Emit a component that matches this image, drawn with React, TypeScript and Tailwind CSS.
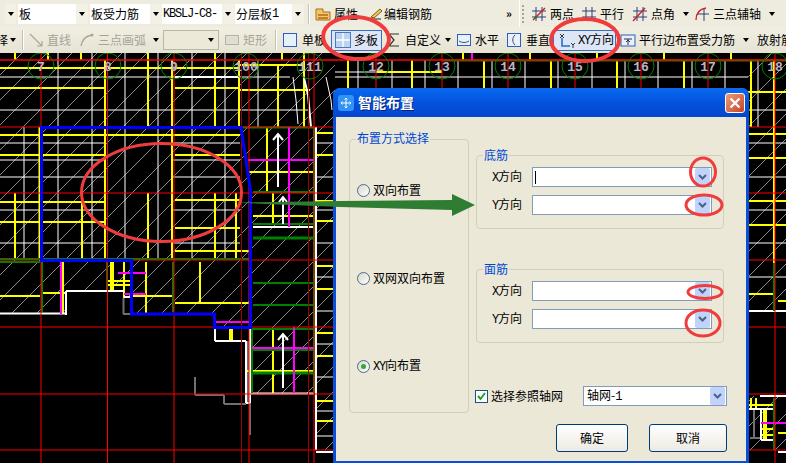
import type { ReactNode } from 'react'

type Seg = [number, number, number, number]

const ys = (y: number, a: number, b: number): Seg => [a, y, b, y]
const xs = (x: number, a: number, b: number): Seg => [x, a, x, b]

const whiteThin: Seg[] = [
  ...[24, 58, 92, 125, 158, 192, 225].map((x) => xs(x, 127, 260)),
  ...[58, 92, 125, 158, 192, 225].map((x) => xs(x, 53, 127)),
  ...[143, 160, 177, 210, 243].flatMap((y) => [ys(y, 0, 105), ys(y, 172, 240)]),
  ys(77, 0, 240),
  ys(110, 0, 310),
  ys(110, 748, 786),
  ...[277, 311, 344, 377, 411, 436, 143, 177, 210, 243].map((y) => ys(y, 316, 335)),
  ...[358, 392, 425, 458, 492, 525, 558, 592, 625, 658, 692, 725, 758].map((x) => xs(x, 60, 88)),
  ys(72, 335, 376),
  ys(77, 335, 748),
  xs(758, 88, 127),
  ...[143, 177, 210, 243, 277].map((y) => ys(y, 748, 786)),
  xs(258, 60, 127),
  ys(77, 240, 290),
]

const whiteThick: Seg[] = [
  ys(77, 175, 240),
  xs(316, 127, 450),
  ys(313.5, 0, 66),
  xs(66, 291, 315),
  ys(291, 66, 124),
  ys(297, 124, 131),
  xs(215, 328, 341),
  ys(341, 215, 246),
  xs(246, 341, 403),
  ys(403, 246, 250),
  xs(250, 327, 403),
  ys(227, 253, 314),
  ys(393.5, 250, 314),
  ys(311, 748, 786),
  ys(452, 316, 335),
  ys(452, 778, 786),
  ys(409, 748, 775),
  ys(396, 760, 786),
  xs(761, 410, 440),
  ys(440, 761, 775),
]

const yellow: Seg[] = [
  ys(68, 0, 105),
  ys(68, 108, 172),
  ys(68, 172, 240),
  ys(65, 240, 305),
  ys(90, 240, 310),
  ys(88, 0, 105),
  ys(88, 175, 240),
  ys(135, 0, 240),
  ys(155, 0, 105),
  ys(155, 175, 240),
  ys(202, 0, 105),
  ys(200, 175, 240),
  ys(222, 0, 105),
  ys(228, 175, 240),
  ys(251, 175, 249),
  xs(39.5, 127, 260),
  xs(105, 60, 260),
  xs(148, 53, 127),
  xs(172, 60, 260),
  xs(215, 53, 127),
  xs(239, 60, 127),
  xs(278, 65, 127),
  xs(304, 53, 127),
  xs(15, 193, 260),
  xs(82, 193, 260),
  xs(148, 193, 260),
  xs(215, 193, 260),
  xs(236, 193, 260),
  xs(15, 53, 60),
  xs(48, 53, 60),
  xs(81, 53, 60),
  xs(282, 53, 60),
  xs(267, 127, 193),
  ys(172, 248, 314),
  xs(273, 193, 225),
  ys(216, 253, 314),
  xs(200, 262, 303),
  ys(303, 175, 249),
  xs(63, 262, 314),
  ys(296, 0, 40),
  ys(293, 42, 65),
  ys(281, 108, 130),
  ys(285, 108, 130),
  xs(124, 262, 298),
  xs(146, 262, 313),
  ys(296, 130, 174),
  xs(273, 328, 393),
  ys(371, 247, 314),
  ...[133, 155, 201, 221, 266, 289, 333, 356, 401, 421].map((y) => ys(y, 316, 335)),
  ...[348, 412, 484, 551, 617, 684, 751].map((x) => xs(x, 60, 88)),
  ...[463, 530, 597, 664, 731].map((x) => xs(x, 53, 60)),
  ys(72, 376, 442),
  ys(92, 748, 786),
  ys(134, 748, 786),
  ys(158, 748, 786),
  ys(201, 748, 786),
  ys(225, 748, 786),
  ys(294, 748, 775),
  ys(301, 778, 786),
  xs(774, 60, 263),
  xs(751, 88, 127),
  xs(751, 398, 410),
  xs(756, 398, 410),
  ys(405, 748, 775),
  ys(429, 762, 775),
  ys(435, 762, 775),
  ys(433, 778, 786),
]

const yellowFat: Seg[] = [xs(112, 262, 291), xs(231, 328, 340), xs(765, 410, 440)]

const magenta: Seg[] = [
  xs(472, 53, 60),
  xs(289, 127, 227),
  ys(160, 248, 314),
  xs(61, 262, 314),
  ys(273, 118, 146),
  ys(294, 124, 146),
  ys(322, 215, 249),
  xs(294, 327, 393),
  ys(348, 252, 314),
  ys(423, 761, 786),
]

const green: Seg[] = [
  ys(60.5, 442, 786),
  ys(127.5, 243, 314),
  ys(192, 253, 314),
  ys(224, 253, 314),
  ys(283, 253, 314),
  ys(305, 253, 314),
  ys(259, 0, 250),
  ys(262, 0, 40),
  xs(42, 262, 312),
  xs(107, 262, 290),
  xs(173, 262, 312),
  xs(252, 329, 393),
  xs(314, 127, 393),
  ys(329, 252, 314),
  ys(350, 252, 314),
  xs(774, 263, 311),
  xs(774, 398, 450),
]

const gray: Seg[] = [
  xs(123.5, 298, 314),
  ys(314, 123, 131),
  xs(195, 377, 395),
  ys(395, 195, 224),
  xs(224, 395, 404),
  ys(404, 224, 246),
  xs(250, 403, 435),
  xs(248, 341, 403),
  xs(754, 410, 438),
  ys(438, 750, 760),
]

const axes = [
  [41, '7'],
  [108, '8'],
  [174, '9'],
  [246, '100'],
  [310, '111'],
  [376, '12'],
  [442, '13'],
  [508, '14'],
  [575, '15'],
  [641, '16'],
  [708, '17'],
  [775, '18'],
] as const

function Lines({ segs, color, width }: { segs: Seg[]; color: string; width: number }) {
  return (
    <g stroke={color} strokeWidth={width}>
      {segs.map((s, i) => (
        <line key={i} x1={s[0]} y1={s[1]} x2={s[2]} y2={s[3]} />
      ))}
    </g>
  )
}

function CadCanvas() {
  return (
    <svg className="block h-[410px] w-[786px] flex-none bg-black" viewBox="0 53 786 410">
      <defs>
        <pattern id="hatch" width="25" height="25" patternUnits="userSpaceOnUse">
          <path d="M-5 30 L30 -5" stroke="#8a8a8a" strokeWidth="1" />
        </pattern>
      </defs>
      {/* hatched slab area */}
      <path
        d="M0 53H786V311H748V53H335V450H316V394H250V327H215V314H131V298H124V291H66V313H0Z"
        fill="url(#hatch)"
      />
      <path d="M748 396H786V450H748Z" fill="url(#hatch)" />
      <Lines segs={whiteThin} color="#ffffff" width={1} />
      <Lines segs={gray} color="#707070" width={2} />
      <Lines segs={yellow} color="#ffff00" width={2} />
      <Lines segs={yellowFat} color="#ffff00" width={4} />
      <Lines segs={whiteThick} color="#ffffff" width={2} />
      <g fill="none" stroke="#ffffff">
        <path d="M293 77L296 100L298 124" />
        <path d="M304 78L308 95L311 127" strokeWidth="2" />
        <path d="M326 77L331 100L332 110" />
      </g>
      <Lines segs={green} color="#008000" width={2} />
      <Lines segs={[ys(238, 253, 314), ys(373, 252, 314)]} color="#008000" width={3} />
      <Lines segs={magenta} color="#ff00ff" width={2} />
      {/* axis grid */}
      <g stroke="#ff0000" strokeWidth="1">
        {[41, 107.5, 174, 249, 314, 376, 442, 508, 575, 641, 708, 775].map((x) => (
          <line key={x} x1={x} y1="53" x2={x} y2="463" />
        ))}
        {[127, 193, 260, 327, 394, 450].map((y) => (
          <line key={y} x1="0" y1={y} x2="786" y2={y} />
        ))}
        <line x1="0" y1="60" x2="786" y2="60" strokeWidth="1.5" />
      </g>
      <g stroke="#a00000" strokeWidth="1">
        <line x1="241.5" y1="53" x2="241.5" y2="463" />
        <line x1="308.5" y1="53" x2="308.5" y2="463" />
      </g>
      {/* rebar arrows */}
      <g fill="none" stroke="#ffffff" strokeWidth="2">
        <path d="M278 187V135M273 140L278 134L283 140" />
        <path d="M283 224V198M279 202L283 197L287 202" />
        <path d="M283 388V335M278 340L283 334L288 340" />
      </g>
      {/* slab outline */}
      <path
        d="M41.5 127.5H241L250.5 190V327.5H214.5V314H131.5V260.5H41.5Z"
        fill="none"
        stroke="#0000ff"
        strokeWidth="3"
      />
      {axes.map(([x, label]) => (
        <g key={label}>
          <circle cx={x} cy="66" r="13" fill="none" stroke="#008000" strokeWidth="1" />
          <text
            x={x}
            y="71"
            textAnchor="middle"
            fill="#b8b8c8"
            fontSize="13"
            fontWeight="700"
            fontFamily="'Liberation Mono', monospace"
          >
            {label}
          </text>
        </g>
      ))}
    </svg>
  )
}

function Overlay() {
  return (
    <svg className="pointer-events-none absolute left-0 top-0 h-[463px] w-[786px]" viewBox="0 0 786 463">
      <path
        d="M231 202.5L340 201L452 200V194L475 205L452 216V210L340 207Z"
        fill="#2e7d32"
      />
      <g fill="none" stroke="#f03c3c" strokeWidth="3">
        <ellipse cx="161.5" cy="192.5" rx="80" ry="49" />
        <ellipse cx="356" cy="38" rx="33" ry="21" strokeWidth="4" transform="rotate(4 356 38)" />
        <ellipse cx="585" cy="40" rx="34" ry="21" strokeWidth="4" />
        <ellipse cx="703" cy="172" rx="12.5" ry="14" />
        <ellipse cx="704" cy="205" rx="18" ry="10" />
        <ellipse cx="705" cy="292" rx="17" ry="6.5" />
        <ellipse cx="703" cy="323" rx="17" ry="13" />
      </g>
    </svg>
  )
}

function Half({ children }: { children: ReactNode }) {
  return <span className="font-['Liberation_Mono',monospace] tracking-[-1.2px]">{children}</span>
}

function DownArrow({ className = '' }: { className?: string }) {
  return (
    <span
      className={`h-0 w-0 flex-none border-x-[3.5px] border-t-[4px] border-x-transparent border-t-black ${className}`}
    />
  )
}

function Sep({ className = '' }: { className?: string }) {
  return <span className={`h-[20px] w-[2px] flex-none border-l border-r border-l-[#c5c2b0] border-r-white ${className}`} />
}

function ToolCombo({ children, width }: { children?: ReactNode; width: string }) {
  return (
    <>
      <span className={`flex h-[20px] flex-none items-center bg-white pl-[1px] ${width}`}>{children}</span>
      <span className="flex h-[20px] w-[12px] flex-none items-center justify-center bg-[#f3f1e6]">
        <DownArrow />
      </span>
    </>
  )
}

function Icon({ children, className = '' }: { children: ReactNode; className?: string }) {
  return (
    <svg className={`h-[16px] w-[16px] flex-none ${className}`} viewBox="0 0 16 16" fill="none">
      {children}
    </svg>
  )
}

function TopToolbar() {
  return (
    <div className="flex h-[27px] flex-none items-center bg-[#eeecdf] pl-[5px] text-[12px] text-black">
      <span className="flex h-[20px] w-[11px] flex-none items-center justify-center bg-[#f3f1e6]">
        <DownArrow />
      </span>
      <span className="w-[2px] flex-none" />
      <ToolCombo width="w-[58px]">板</ToolCombo>
      <span className="w-[2px] flex-none" />
      <ToolCombo width="w-[60px]">板受力筋</ToolCombo>
      <ToolCombo width="w-[60px]">
        <Half>KBSLJ-C8-</Half>
      </ToolCombo>
      <span className="w-[1px] flex-none" />
      <ToolCombo width="w-[57px]">
        分层板<Half>1</Half>
      </ToolCombo>
      <Sep className="ml-[4px]" />
      <Icon className="ml-[5px]">
        <path d="M1 3H8V6H15V14H1Z" fill="#f4c66a" stroke="#a8701c" />
        <path d="M3 9H13M3 12H13" stroke="#b26a10" strokeWidth="1.5" />
      </Icon>
      <span className="ml-[3px] w-[27px] flex-none">属性</span>
      <Icon className="ml-[6px]">
        <path d="M2 13H14" stroke="#222" />
        <path d="M4 11L13 3L15 5L7 12Z" fill="#f0c860" stroke="#7a5a10" />
      </Icon>
      <span className="ml-[1px] w-[60px] flex-none">编辑钢筋</span>
      <span className="ml-[62px] w-[12px] flex-none text-[11px] font-bold leading-none">»</span>
      <span className="ml-[1px] h-[27px] w-[1px] flex-none bg-white" />
      <span className="ml-[2px] h-[18px] w-[2px] flex-none border-l-2 border-dotted border-[#a8a698]" />
      <Icon className="ml-[7px]">
        <path d="M5 1V15M11 1V15M1 5H15M1 11H15" stroke="#2a3f7a" />
        <path d="M2 14L14 2" stroke="#d02020" strokeWidth="1.4" />
        <circle cx="5" cy="11" r="1.5" fill="#2a7a2a" />
      </Icon>
      <span className="ml-[3px] w-[25px] flex-none">两点</span>
      <Icon className="ml-[6px]">
        <path d="M5 1V15M11 1V15M1 5H15M1 11H15" stroke="#2a3f7a" />
      </Icon>
      <span className="ml-[3px] w-[26px] flex-none">平行</span>
      <Icon className="ml-[6px]">
        <path d="M5 1V15M11 1V15M1 5H15M1 11H15" stroke="#2a3f7a" />
        <path d="M1 15L13 2" stroke="#d02020" strokeWidth="1.4" />
      </Icon>
      <span className="ml-[3px] w-[26px] flex-none">点角</span>
      <DownArrow className="ml-[6px]" />
      <Icon className="ml-[5px]">
        <path d="M10 2V15M3 8H15" stroke="#2a3f7a" />
        <path d="M2 14C2 7 6 3 12 2" stroke="#d02020" strokeWidth="1.3" />
      </Icon>
      <span className="ml-[3px] w-[50px] flex-none">三点辅轴</span>
      <DownArrow className="ml-[6px]" />
    </div>
  )
}

function BottomToolbar() {
  return (
    <div className="flex h-[26px] flex-none items-center overflow-hidden bg-gradient-to-b from-[#f1efe3] to-[#e6e3d3] text-[12px] text-black">
      <span className="ml-[-4px] w-[12px] flex-none">择</span>
      <DownArrow className="ml-[2px]" />
      <Sep className="ml-[6px]" />
      <Icon className="ml-[4px]">
        <path d="M2 2L14 14M14 14V9M14 14H9" stroke="#a8a698" strokeWidth="1.2" />
      </Icon>
      <span className="ml-[3px] w-[26px] flex-none text-[#a5a396]">直线</span>
      <Icon className="ml-[6px]">
        <path d="M2 14C3 7 7 4 13 3" stroke="#a8a698" strokeWidth="1.4" />
        <circle cx="13" cy="3" r="1.5" fill="#a8a698" />
      </Icon>
      <span className="ml-[3px] w-[50px] flex-none text-[#a5a396]">三点画弧</span>
      <DownArrow className="ml-[5px] border-t-[#a5a396]" />
      <span className="ml-[4px] flex h-[20px] w-[56px] flex-none items-center justify-end border border-[#b8b6a4] bg-[#ece9d8] pr-[4px]">
        <DownArrow className="border-t-[#a5a396]" />
      </span>
      <Icon className="ml-[5px]">
        <rect x="1.5" y="3.5" width="13" height="9" fill="#e0ded0" stroke="#b5b3a5" />
      </Icon>
      <span className="ml-[3px] w-[26px] flex-none text-[#a5a396]">矩形</span>
      <Sep className="ml-[6px]" />
      <Icon className="ml-[5px]">
        <rect x="1.5" y="1.5" width="13" height="13" fill="#e8f0fb" stroke="#2c5fc0" />
      </Icon>
      <span className="ml-[4px] w-[23px] flex-none overflow-hidden whitespace-nowrap">单板</span>
      <span className="ml-[6px] flex h-[21px] w-[51px] flex-none items-center border border-[#3a6ec2] bg-[#dce6f6]">
        <svg className="ml-[3px] h-[16px] w-[16px] flex-none" viewBox="0 0 16 16">
          <rect x="0.5" y="0.5" width="15" height="15" fill="#bcd4f2" stroke="#4a7ab8" />
          <path d="M8 1V15M1 8H15" stroke="#fff" strokeWidth="1.4" />
        </svg>
        <span className="ml-[3px]">多板</span>
      </span>
      <Icon className="ml-[4px]">
        <path d="M13 2H3L8 8L3 14H13" stroke="#333" strokeWidth="1.2" />
      </Icon>
      <span className="ml-[3px] w-[38px] flex-none">自定义</span>
      <DownArrow className="ml-[2px]" />
      <Icon className="ml-[5px]">
        <rect x="1.5" y="2.5" width="13" height="11" fill="#e8f0fb" stroke="#2c5fc0" />
        <path d="M3 9C6 11 10 11 13 9" stroke="#446" />
      </Icon>
      <span className="ml-[3px] w-[26px] flex-none">水平</span>
      <Icon className="ml-[5px]">
        <rect x="1.5" y="1.5" width="13" height="13" fill="#e8f0fb" stroke="#2c5fc0" />
        <path d="M9 3C6 6 6 10 9 13" stroke="#446" />
      </Icon>
      <span className="ml-[4px] w-[24px] flex-none">垂直</span>
      <span className="ml-[3px] flex h-[21px] w-[63px] flex-none items-center border border-[#3a6ec2] bg-[#dce6f6]">
        <svg className="ml-[3px] h-[16px] w-[18px] flex-none" viewBox="0 0 18 16" fill="none">
          <path d="M5 6L5 14L13 14" stroke="#1f6fd0" strokeWidth="1.6" />
          <path d="M3 2L7 6M7 2L3 6" stroke="#333" />
          <path d="M14 11L16 13L18 11M16 13V16" stroke="#333" />
        </svg>
        <span className="ml-[3px] whitespace-nowrap">
          <Half>XY</Half>方向
        </span>
      </span>
      <Icon className="ml-[4px]">
        <rect x="1" y="3" width="14" height="11" fill="#e8f0fb" stroke="#2c5fc0" />
        <path d="M4 7H12M8 7V13M6 10L8 8L10 10" stroke="#334" />
      </Icon>
      <span className="ml-[3px] w-[98px] flex-none">平行边布置受力筋</span>
      <DownArrow className="ml-[6px]" />
      <span className="ml-[8px] flex-none whitespace-nowrap">放射筋</span>
    </div>
  )
}

function RadioRow({ label, checked }: { label: ReactNode; checked?: boolean }) {
  return (
    <label className="flex h-[16px] items-center pl-[7px]">
      <span className="flex h-[13px] w-[13px] flex-none items-center justify-center rounded-full border border-[#4a6a90] bg-gradient-to-br from-[#d8d8cc] to-white">
        {checked && <span className="h-[5px] w-[5px] rounded-full bg-[#31a83c]" />}
      </span>
      <span className="ml-[3px] whitespace-nowrap">{label}</span>
    </label>
  )
}

function Chevron() {
  return (
    <span className="flex h-[18px] w-[15px] flex-none items-center justify-center rounded-[2px] bg-[#c1d3fb]">
      <svg className="h-[6px] w-[9px]" viewBox="0 0 9 6" fill="none">
        <path d="M1 1L4.5 4.5L8 1" stroke="#4d6185" strokeWidth="2" />
      </svg>
    </span>
  )
}

function DirRow({ axis, caret }: { axis: string; caret?: boolean }) {
  return (
    <div className="flex h-[20px] items-center pl-[15px]">
      <span className="w-[40px] flex-none">
        <Half>{axis}</Half>方向
      </span>
      <span className="flex h-[20px] w-[180px] flex-none items-center justify-between border border-[#7f9db9] bg-white pr-[1px]">
        {caret ? <span className="ml-[2px] h-[13px] w-[1px] bg-black" /> : <span />}
        <Chevron />
      </span>
    </div>
  )
}

function RebarGroup({ title, axes: children }: { title: string; axes: ReactNode }) {
  return (
    <div className="relative flex h-[74px] w-[248px] flex-col gap-[8px] rounded-[4px] border border-[#d0cfbc] pt-[11px]">
      <span className="absolute left-[6px] top-[-9px] bg-[#ebe8d8] px-[1px] leading-[16px] text-[#0046d5]">{title}</span>
      {children}
    </div>
  )
}

function Dialog() {
  return (
    <div className="absolute left-[333px] top-[88px] flex h-[375px] w-[416px] flex-col rounded-t-[7px] bg-[#0a4fdc] px-[3px] pb-[2px] text-[12px] text-black">
      <div className="mx-[-3px] flex h-[29px] flex-none items-center rounded-t-[7px] bg-gradient-to-b from-[#0a6af0] via-[#0552dc] to-[#0346cf] px-[5px]">
        <span className="flex h-[16px] w-[16px] flex-none items-center justify-center rounded-[3px] bg-[#2f94f5]">
          <svg className="h-[12px] w-[12px]" viewBox="0 0 12 12" fill="none">
            <path d="M6 1V11M1 6H11M4.5 2.5L6 1L7.5 2.5M4.5 9.5L6 11L7.5 9.5M2.5 4.5L1 6L2.5 7.5M9.5 4.5L11 6L9.5 7.5" stroke="#fff" />
          </svg>
        </span>
        <span className="ml-[4px] text-[14px] font-bold text-white [text-shadow:1px_1px_0_#02257a]">
          智能布置
        </span>
        <span className="ml-auto mr-[-1px] flex h-[20px] w-[20px] items-center justify-center rounded-[3px] border border-white bg-gradient-to-br from-[#ea9a7c] to-[#c8401c]">
          <svg className="h-[12px] w-[12px]" viewBox="0 0 12 12">
            <path d="M1.5 1.5L10.5 10.5M10.5 1.5L1.5 10.5" stroke="#fff" strokeWidth="2.4" />
          </svg>
        </span>
      </div>
      <div className="flex min-h-0 flex-1 bg-[#ebe8d8]">
        <div className="relative ml-[13px] mt-[22px] flex h-[274px] w-[120px] flex-none flex-col gap-[72px] rounded-[4px] border border-[#d0cfbc] pt-[42px]">
          <span className="absolute left-[6px] top-[-10px] bg-[#ebe8d8] px-[1px] leading-[16px] text-[#0046d5]">布置方式选择</span>
          <RadioRow label="双向布置" />
          <RadioRow label="双网双向布置" />
          <RadioRow
            label={
              <>
                <Half>XY</Half>向布置
              </>
            }
            checked
          />
        </div>
        <div className="ml-[7px] mt-[38px] flex w-[251px] flex-none flex-col">
          <RebarGroup
            title="底筋"
            axes={
              <>
                <DirRow axis="X" caret />
                <DirRow axis="Y" />
              </>
            }
          />
          <div className="mt-[40px]">
            <RebarGroup
              title="面筋"
              axes={
                <>
                  <DirRow axis="X" />
                  <DirRow axis="Y" />
                </>
              }
            />
          </div>
          <div className="mt-[43px] flex h-[20px] items-center">
            <span className="ml-[-1px] flex h-[13px] w-[13px] flex-none items-center justify-center border border-[#1c5180] bg-white">
              <svg className="h-[9px] w-[9px]" viewBox="0 0 9 9" fill="none">
                <path d="M1 4L3.5 7L8 1" stroke="#21a121" strokeWidth="2" />
              </svg>
            </span>
            <span className="ml-[3px] whitespace-nowrap">选择参照轴网</span>
            <span className="ml-auto flex h-[20px] w-[144px] flex-none items-center justify-between border border-[#7f9db9] bg-white pl-[3px] pr-[1px]">
              <span>
                轴网-<Half>1</Half>
              </span>
              <Chevron />
            </span>
          </div>
          <div className="mt-[18px] flex justify-end gap-[21px]">
            <button className="h-[28px] w-[72px] rounded-[3px] border border-[#003c74] bg-gradient-to-b from-white to-[#eceae2] text-center">
              确定
            </button>
            <button className="h-[28px] w-[78px] rounded-[3px] border border-[#003c74] bg-gradient-to-b from-white to-[#eceae2] text-center">
              取消
            </button>
          </div>
        </div>
      </div>
    </div>
  )
}

export default function App() {
  return (
    <div className="relative flex h-[463px] w-[786px] flex-col overflow-hidden bg-black font-['Noto_Sans_CJK_SC','Liberation_Sans',sans-serif]">
      <TopToolbar />
      <BottomToolbar />
      <CadCanvas />
      <Dialog />
      <Overlay />
    </div>
  )
}
